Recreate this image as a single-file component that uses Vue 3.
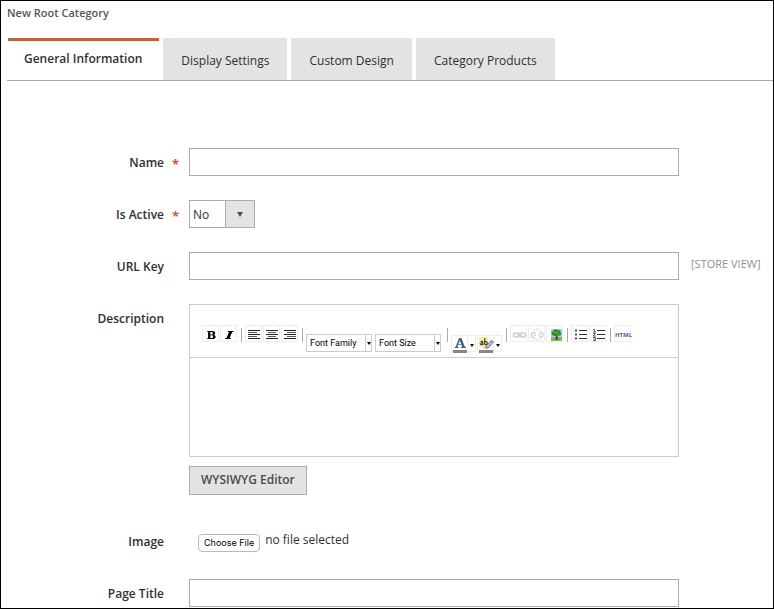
<script setup>
import { ref } from 'vue'

const tabs = ['General Information', 'Display Settings', 'Custom Design', 'Category Products']
const activeTab = ref(tabs[0])
const name = ref('')
const isActive = ref('No')
const urlKey = ref('')
const description = ref('')
const pageTitle = ref('')
const fileName = ref('')

function pickFile(event) {
  fileName.value = event.target.files[0]?.name ?? ''
}
</script>

<template>
  <main class="page">
    <h1 class="title">New Root Category</h1>

    <nav class="tabs" role="tablist">
      <button
        v-for="tab in tabs"
        :key="tab"
        type="button"
        role="tab"
        class="tab"
        :class="{ active: tab === activeTab }"
        :aria-selected="tab === activeTab"
        @click="activeTab = tab"
      >{{ tab }}</button>
    </nav>

    <form class="form" @submit.prevent>
      <div class="row">
        <label class="label" for="name">Name<span class="mark">*</span></label>
        <input id="name" v-model="name" class="text" type="text" required />
      </div>

      <div class="row">
        <label class="label" for="active">Is Active<span class="mark">*</span></label>
        <span class="select">
          <select id="active" v-model="isActive">
            <option>No</option>
            <option>Yes</option>
          </select>
        </span>
      </div>

      <div class="row">
        <label class="label" for="url">URL Key<span class="mark"></span></label>
        <input id="url" v-model="urlKey" class="text" type="text" />
        <span class="scope">[STORE VIEW]</span>
      </div>

      <div class="row">
        <label class="label" for="description">Description<span class="mark"></span></label>
        <div class="description">
          <div class="editor">
            <div class="toolbar" role="toolbar">
              <button type="button" class="tool" aria-label="Bold">
                <svg viewBox="0 0 16 16"><path d="M4 5h5.2c2 0 3 .7 3 2 0 .9-.6 1.5-1.600 1.800 1.300.200 2 .9 2 1.900 0 1.500-1.200 2.300-3.200 2.300H4v-.8h1.100V5.800H4zM7.300 5.900v2.600h1c1 0 1.500-.5 1.500-1.300s-.5-1.300-1.400-1.300zm0 3.400v2.800h1.200c1.100 0 1.600-.5 1.600-1.400s-.6-1.400-1.700-1.400z" fill="#000" fill-rule="evenodd" /></svg>
              </button>
              <button type="button" class="tool" aria-label="Italic">
                <svg viewBox="0 0 16 16"><path d="M7 5h5.600l-.3.900h-1.100l-2.500 6.200h1.200l-.3.900H4l.3-.9h1.200L8 5.900H6.700z" fill="#000" /></svg>
              </button>
              <span class="separator"></span>
              <button type="button" class="tool" aria-label="Align left">
                <svg viewBox="0 0 16 16"><path d="M2 4.500h12M2 8.500h12M2 12.500h12" stroke="#222" /><path d="M2 6.500h9M2 10.500h9" stroke="#555" /></svg>
              </button>
              <button type="button" class="tool" aria-label="Align center">
                <svg viewBox="0 0 16 16"><path d="M2 4.500h12M2 8.500h12M2 12.500h12" stroke="#222" /><path d="M4 6.500h8M4 10.500h8" stroke="#555" /></svg>
              </button>
              <button type="button" class="tool" aria-label="Align right">
                <svg viewBox="0 0 16 16"><path d="M2 4.500h12M2 8.500h12M2 12.500h12" stroke="#222" /><path d="M5 6.500h9M5 10.500h9" stroke="#555" /></svg>
              </button>
              <span class="separator"></span>
              <span class="list">
                <select aria-label="Font family"><option>Font Family</option></select>
              </span>
              <span class="list">
                <select aria-label="Font size"><option>Font Size</option></select>
              </span>
              <span class="separator"></span>
              <span class="split">
                <button type="button" class="tool" aria-label="Text color">
                  <svg viewBox="0 0 16 16"><path d="M7 2h2.400l3.300 8.600 1.100.300v1H9v-1l1.100-.3-.6-1.800H6l-.6 1.800 1.200.3v1H2.700v-1l1.100-.3zM7.700 4.400 6.400 7.900h2.700z" fill="#44608f" fill-rule="evenodd" /><path d="M1 14h14v3H1z" fill="#888" /></svg>
                </button>
                <button type="button" class="more" aria-label="More text colors"></button>
              </span>
              <span class="split">
                <button type="button" class="tool" aria-label="Background color">
                  <svg viewBox="0 0 16 16"><path d="M1 1h9v10H1z" fill="#f5ef9b" /><path d="M4.800 9V5.400H2.600M4.800 7H3c-1.200 0-1.200 1.700 0 1.700h1.800M6.800 2v6.700h1.400c1.500 0 1.500-3.200 0-3.200H6.800" fill="none" stroke="#222" /><path d="m8.500 10 4.500-5.500 2.500 1.200L11 11.500 8 12.500z" fill="#b3c1d8" stroke="#566477" stroke-width=".8" /><path d="M5.500 12.500c1-2 2-1.500 3-.5" stroke="#b2b02d" fill="none" /><path d="M1 14h14v3H1z" fill="#888" /></svg>
                </button>
                <button type="button" class="more" aria-label="More background colors"></button>
              </span>
              <span class="separator"></span>
              <button type="button" class="tool" aria-label="Insert link">
                <svg viewBox="0 0 16 16"><g fill="none" stroke="#c9ced9" stroke-width="1.500"><rect x="2.500" y="7" width="6" height="4" rx="2" /><rect x="8.500" y="7" width="6" height="4" rx="2" /><path d="M6 9h5" /></g></svg>
              </button>
              <button type="button" class="tool" aria-label="Remove link">
                <svg viewBox="0 0 16 16"><g fill="none" stroke="#cdd2dc" stroke-width="1.500"><path d="M7 7H4C1.700 7 1.700 11.500 4 11.500h2M10 6.500h2c2.500 0 2.500 4.500 0 4.500h-2M5 9.200h2M9.500 8.800h2" /></g><path d="M8 2v3M4 3l2 2.500M12 3l-2 2.500M8 15v-2.500M4.500 14.500l2-1.800M12 14.500l-2-2" stroke="#d8dbe2" /></svg>
              </button>
              <button type="button" class="tool" aria-label="Insert image">
                <svg viewBox="0 0 16 16"><path d="M4 3h11v8H4z" fill="#a9cce2" /><path d="M4 11h11v4H4z" fill="#7dbb5c" /><path d="M8.800 9h1.700l.2 3 1.500 1.500H7.500L8.800 12z" fill="#61401c" /><path d="M5 8.500C3.800 7 5 5.300 6.300 5.300 6.500 3.300 9 2.700 10.300 4c2-.6 3.400.7 3.200 2.200 1.400 1.500.5 3.500-1.300 3.300-1.200.9-2.500.9-3.200.2-1.700.6-3.300.1-4-1.200z" fill="#2f8a26" /><path d="M6.500 6.500h3M10.500 5h1.500M10 8h2" stroke="#7cc04f" /></svg>
              </button>
              <span class="separator"></span>
              <button type="button" class="tool" aria-label="Bulleted list">
                <svg viewBox="0 0 16 16"><path d="M3 3.500h2v2H3zM3 7.500h2v2H3zM3 11.500h2v2H3z" fill="#3c5687" /><path d="M7 4.500h8M7 8.500h8M7 12.500h8" stroke="#333" /></svg>
              </button>
              <button type="button" class="tool" aria-label="Numbered list">
                <svg viewBox="0 0 16 16"><path d="M3 3.500h1.500V6M3 6h3M3 7.500h2.500L3 10h3M3 11.500h2.500v3H3M3.500 13h2" fill="none" stroke="#3f609d" /><path d="M7 4.500h8M7 8.500h8M7 12.500h8" stroke="#333" /></svg>
              </button>
              <span class="separator"></span>
              <button type="button" class="tool html">HTML</button>
            </div>
            <textarea id="description" v-model="description"></textarea>
          </div>
          <button type="button" class="toggle">WYSIWYG Editor</button>
        </div>
      </div>

      <div class="row">
        <label class="label" for="image">Image<span class="mark"></span></label>
        <div class="file">
          <input id="image" type="file" accept="image/*" @change="pickFile" />
          <label class="choose" for="image">Choose File</label>
          <span class="file-name">{{ fileName || 'no file selected' }}</span>
        </div>
      </div>

      <div class="row">
        <label class="label" for="page-title">Page Title<span class="mark"></span></label>
        <input id="page-title" v-model="pageTitle" class="text" type="text" />
      </div>
    </form>
  </main>
</template>

<style>
body {
  background: #fff;
}
</style>

<style scoped>
* {
  box-sizing: border-box;
}

.page,
button,
input,
select,
textarea {
  font-family: "Open Sans", "Noto Sans", sans-serif;
}

.page {
  min-height: 100vh;
  border: 1px solid #000;
  color: #303030;
  font-size: 12px;
  line-height: 16px;
}

button,
select,
input,
textarea {
  margin: 0;
  padding: 0;
  border-radius: 0;
  color: inherit;
}

.title {
  margin: 0;
  padding: 4px 6px 17px;
  color: #5a554f;
  font-size: 11px;
  font-weight: 600;
  line-height: 16px;
}

.tabs {
  display: flex;
  gap: 4px;
  margin-left: 6px;
  padding-left: 1px;
  border-bottom: 1px solid #aaa;
}

.tab {
  height: 42px;
  padding: 2px 18px 0;
  border: 0;
  background: #e3e3e3;
  font-size: 12px;
  white-space: nowrap;
}

.tab.active {
  padding: 0 17px 4px 16px;
  border-top: 3px solid #c0623a;
  background: #fff;
  font-weight: 600;
}

.form {
  display: flex;
  flex-direction: column;
  gap: 24px;
  padding: 67px 12px 1px 7px;
}

.row {
  display: grid;
  grid-template-columns: 171px minmax(0, 1fr) 72px;
  gap: 10px;
  align-items: start;
}

.label {
  display: flex;
  justify-content: flex-end;
  padding-top: 7px;
  font-weight: 600;
}

.mark {
  width: 15px;
  height: 16px;
  color: #c85a35;
  font-size: 13px;
  font-weight: 700;
  line-height: 18px;
  text-align: right;
}

.text {
  width: 100%;
  height: 28px;
  padding: 0 8px;
  border: 1px solid #adadad;
  background: #fff;
  font-size: 12px;
}

.select {
  position: relative;
  display: block;
  width: 66px;
  height: 28px;
}

.select select {
  appearance: none;
  width: 100%;
  height: 100%;
  padding: 0 30px 0 3px;
  border: 1px solid #adadad;
  background: linear-gradient(#adadad, #adadad) right 28px top / 1px 100% no-repeat,
    linear-gradient(#e3e3e3, #e3e3e3) right / 28px 100% no-repeat, #fff;
  font-size: 12px;
}

.select::after {
  content: "";
  position: absolute;
  top: 12px;
  right: 12px;
  border: 3px solid transparent;
  border-top: 5px solid #514943;
  border-bottom: 0;
  pointer-events: none;
}

.scope {
  padding: 4px 0 0 2px;
  color: #919191;
  font-size: 11px;
  white-space: nowrap;
}

.editor {
  border: 1px solid #ccc;
}

.toolbar {
  display: flex;
  gap: 1px;
  height: 53px;
  padding: 20px 0 0 12px;
  border-bottom: 1px solid #ccc;
}

.tool {
  flex: none;
  width: 17px;
  height: 17px;
  border: 1px solid #eee;
  background: none;
}

.tool svg {
  display: block;
  width: 16px;
  height: 16px;
  overflow: visible;
}

.separator {
  flex: none;
  width: 1px;
  height: 14px;
  margin: 3px 2px 0 3px;
  background: #aaa;
}

.list {
  position: relative;
  flex: none;
  width: 66px;
  height: 18px;
  margin: 9px 2px 0 0;
}

.list select {
  appearance: none;
  width: 100%;
  height: 100%;
  padding: 0 8px 0 3px;
  border: 1px solid #ccc;
  background: linear-gradient(#ccc, #ccc) right 5px top / 1px 100% no-repeat, #fff;
  color: #000;
  font-family: Roboto, "Open Sans", sans-serif;
  font-size: 9px;
}

.list::after,
.more::after {
  content: "";
  position: absolute;
  top: 8px;
  right: 1px;
  border: 2px solid transparent;
  border-top: 3px solid #000;
  border-bottom: 0;
  pointer-events: none;
}

.split {
  display: flex;
  flex: none;
  margin-top: 10px;
}

.more {
  position: relative;
  width: 8px;
  height: 17px;
  border: 1px solid #eee;
  border-left: 0;
  background: none;
}

.html {
  padding-top: 3px;
  color: #3c5f9b;
  font-size: 6px;
  font-weight: 700;
  line-height: 12px;
}

textarea {
  display: block;
  width: 100%;
  height: 98px;
  padding: 8px;
  border: 0;
  resize: none;
}

.toggle {
  height: 29px;
  margin: 9px 0 8px;
  padding: 0 11px 2px;
  border: 1px solid #adadad;
  background: #e3e3e3;
  color: #514943;
  font-size: 12px;
  font-weight: 600;
}

.file {
  display: flex;
  align-items: flex-start;
  gap: 5px;
  height: 28px;
  padding: 7px 0 0 9px;
}

.file input {
  position: absolute;
  width: 1px;
  height: 1px;
  opacity: 0;
}

.choose {
  height: 18px;
  padding: 0 5px;
  border: 1px solid #bbb;
  border-radius: 4px;
  color: #000;
  font-family: Inter, "Open Sans", sans-serif;
  font-size: 9px;
  line-height: 16px;
}

.file-name {
  margin-top: -2px;
}
</style>
